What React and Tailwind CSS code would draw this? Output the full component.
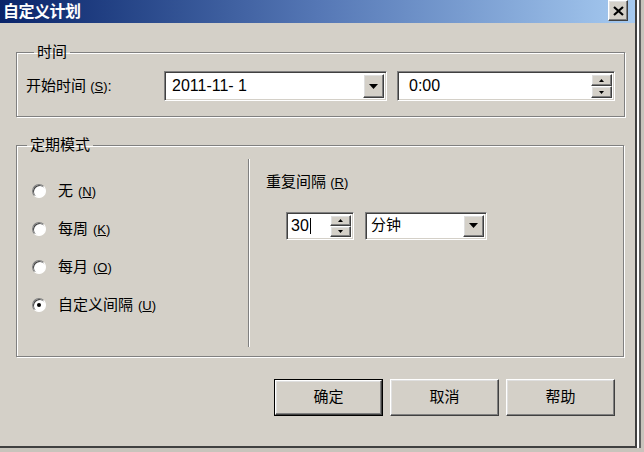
import React from "react";

const FONT = { fontFamily: '"Liberation Sans", "Noto Sans CJK SC", sans-serif' };

const raised =
  "bg-[#d4d0c8] border border-t-white border-l-white border-b-[#404040] border-r-[#404040] shadow-[inset_-1px_-1px_0_#808080,inset_1px_1px_0_#dfdfdf]";
const sunken =
  "bg-white border border-t-[#808080] border-l-[#808080] border-b-white border-r-white shadow-[inset_1px_1px_0_#404040,inset_-1px_-1px_0_#d4d0c8]";
const groupBox =
  "border border-[#808080] shadow-[inset_1px_1px_0_#fff,1px_1px_0_#fff]";

function Tri({ up, size = 4 }) {
  const w = size * 2 + 1;
  return (
    <svg width={w} height={size + 1} viewBox={`0 0 ${w} ${size + 1}`}>
      <polygon
        points={up ? `0,${size + 1} ${w},${size + 1} ${w / 2},0` : `0,0 ${w},0 ${w / 2},${size + 1}`}
        fill="#000"
      />
    </svg>
  );
}

function DropButton() {
  return (
    <div className={`${raised} w-[21px] self-stretch flex items-center justify-center`}>
      <Tri size={4} />
    </div>
  );
}

function Spinner() {
  return (
    <div className="w-[21px] self-stretch flex flex-col">
      <div className={`${raised} flex-1 flex items-center justify-center`}>
        <Tri up size={2} />
      </div>
      <div className={`${raised} flex-1 flex items-center justify-center`}>
        <Tri size={2} />
      </div>
    </div>
  );
}

function Radio({ checked, label, hot }) {
  return (
    <div className="flex items-center h-[20px]">
      <div className="w-[14px] h-[14px] rounded-full bg-white border border-t-[#808080] border-l-[#808080] border-b-white border-r-white shadow-[inset_1px_1px_0_#404040] flex items-center justify-center ml-[15px]">
        {checked && <div className="w-[4px] h-[4px] rounded-full bg-black" />}
      </div>
      <span className="ml-[12px] text-[15px] text-black">
        {label}
        <span className="text-[13px] ml-[5px]">
          (<span className="underline">{hot}</span>)
        </span>
      </span>
    </div>
  );
}

function Button({ children, def }) {
  return (
    <div className={`w-[109px] h-[37px] ${def ? "border border-black" : ""}`}>
      <div className={`${raised} w-full h-full flex items-center justify-center text-[15px] text-black`}>
        {children}
      </div>
    </div>
  );
}

export default function App() {
  return (
    <div className="w-[644px] h-[452px] overflow-hidden bg-[#c8c4bc] flex" style={FONT}>
      <div className="w-[637px] h-[448px] shrink-0 flex flex-col bg-[#d4d0c8] border-r-2 border-b-2 border-[#404040]">
        {/* Title bar */}
        <div className="h-[23px] shrink-0 flex items-center bg-gradient-to-r from-[#0a246a] via-[#5577b5] to-[#a6caf0] pl-[3px] pr-[7px]">
          <span className="text-white font-bold text-[16px] leading-none tracking-[-0.5px]">自定义计划</span>
          <div className="flex-1" />
          <div className={`${raised} w-[20px] h-[21px] -mt-[2px] flex items-center justify-center`}>
            <svg width="11" height="10" viewBox="0 0 11 10">
              <path d="M1 1 L10 9 M10 1 L1 9" stroke="#000" strokeWidth="2.2" />
            </svg>
          </div>
        </div>

        {/* 时间 group */}
        <fieldset className={`${groupBox} ml-[16px] mt-[20px] w-[608px] h-[74px] px-[9px]`}>
          <legend className="ml-[8px] px-[3px] text-[15px] leading-[18px] text-black">时间</legend>
          <div className="flex items-center h-[30px] mt-[10px]">
            <span className="w-[138px] text-[15px] text-black">
              开始时间 <span className="text-[13px]">(<span className="underline">S</span>)</span>:
            </span>
            <div className={`${sunken} w-[223px] h-[30px] flex items-stretch p-[2px]`}>
              <span className="flex-1 pl-[5px] text-[16px] flex items-center text-black">2011-11- 1</span>
              <DropButton />
            </div>
            <div className={`${sunken} ml-[10px] w-[218px] h-[30px] flex items-stretch p-[2px]`}>
              <span className="flex-1 pl-[9px] text-[16px] flex items-center text-black">0:00</span>
              <Spinner />
            </div>
          </div>
        </fieldset>

        {/* 定期模式 group */}
        <fieldset className={`${groupBox} ml-[16px] mt-[19px] w-[608px] h-[221px]`}>
          <legend className="ml-[10px] px-[3px] text-[15px] leading-[18px] text-black">定期模式</legend>
          <div className="flex h-[200px]">
            <div className="w-[231px] flex flex-col pt-[27px] gap-[18px]">
              <Radio label="无" hot="N" />
              <Radio label="每周" hot="K" />
              <Radio label="每月" hot="O" />
              <Radio checked label="自定义间隔" hot="U" />
            </div>
            <div className="w-[2px] mt-[5px] h-[188px] border-l border-[#808080] bg-white" />
            <div className="flex-1 flex flex-col pl-[16px] pt-[17px]">
              <span className="text-[15px] text-black">
                重复间隔 <span className="text-[13px]">(<span className="underline">R</span>)</span>
              </span>
              <div className="flex items-center mt-[18px] ml-[20px]">
                <div className={`${sunken} w-[68px] h-[28px] flex items-stretch p-[2px]`}>
                  <span className="flex-1 pl-[2px] text-[16px] flex items-center text-black">
                    30<span className="inline-block w-[1px] h-[16px] bg-black ml-[1px]" />
                  </span>
                  <Spinner />
                </div>
                <div className={`${sunken} ml-[11px] w-[122px] h-[28px] flex items-stretch p-[2px]`}>
                  <span className="flex-1 pl-[3px] text-[15px] flex items-center text-black">分钟</span>
                  <DropButton />
                </div>
              </div>
            </div>
          </div>
        </fieldset>

        {/* Buttons */}
        <div className="flex gap-[7px] ml-[274px] mt-[22px]">
          <Button def>确定</Button>
          <Button>取消</Button>
          <Button>帮助</Button>
        </div>
      </div>
      <div className="w-[2px] h-[448px] bg-white" />
      <div className="w-[2px] h-[448px] bg-[#606060]" />
    </div>
  );
}
